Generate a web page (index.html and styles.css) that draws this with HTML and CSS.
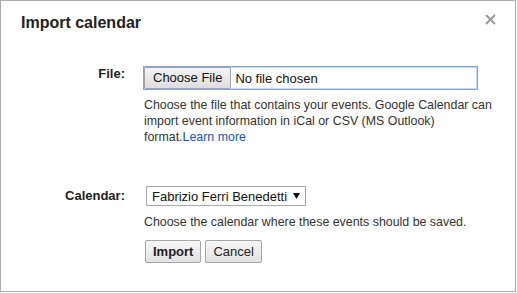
FILE: index.html
```html
<!DOCTYPE html>
<html lang="en">
<head>
    <meta charset="UTF-8">
    <meta name="viewport" content="width=device-width, initial-scale=1.0">
    <title>Import calendar</title>
    <link rel="stylesheet" href="styles.css">
</head>
<body>
    <div class="dialog">
        <h1 class="dialog-title">Import calendar</h1>
        <button class="dialog-close" type="button" aria-label="Close">
            <svg width="11" height="11" viewBox="0 0 11 11">
                <path d="M1 1 L10 10 M10 1 L1 10" stroke="#999" stroke-width="2" fill="none"/>
            </svg>
        </button>

        <form class="import-form" action="#" method="post">
            <div class="row">
                <label class="row-label" for="file">File:</label>
                <div class="row-body">
                    <div class="file-field" id="file">
                        <span class="file-button">Choose File</span>
                        <span class="file-name">No file chosen</span>
                    </div>
                    <p class="help">Choose the file that contains your events. Google Calendar can import event information in iCal or CSV (MS Outlook) format.<a href="#">Learn more</a></p>
                </div>
            </div>

            <div class="row row-calendar">
                <label class="row-label label-calendar" for="calendar">Calendar:</label>
                <div class="row-body">
                    <div class="select" id="calendar">
                        <span>Fabrizio Ferri Benedetti</span>
                        <svg class="select-arrow" width="7" height="6" viewBox="0 0 7 6">
                            <path d="M0 0 L7 0 L3.5 6 Z" fill="#111"/>
                        </svg>
                    </div>
                    <p class="help help-calendar">Choose the calendar where these events should be saved.</p>
                    <div class="actions">
                        <button type="submit" class="btn btn-primary">Import</button>
                        <button type="button" class="btn">Cancel</button>
                    </div>
                </div>
            </div>
        </form>
    </div>
</body>
</html>
```

FILE: styles.css
```css
body {
    margin: 0;
    padding: 0;
    font-family: "Liberation Sans", Arial, sans-serif;
    font-size: 13px;
    color: #222;
    background: #fff;
}

*,
*::before,
*::after {
    box-sizing: border-box;
}

.dialog {
    position: relative;
    width: 516px;
    height: 292px;
    border: 1px solid #acacac;
    padding: 12px 20px;
    background: #fff;
}

.dialog-title {
    margin: 0;
    font-size: 16px;
    line-height: 20px;
    font-weight: bold;
    color: #222;
}

.dialog-close {
    position: absolute;
    top: 13px;
    right: 19px;
    padding: 0;
    border: none;
    background: none;
    width: 11px;
    height: 11px;
    cursor: pointer;
}

.dialog-close svg {
    display: block;
}

.import-form {
    margin-top: 33px;
}

.row {
    display: flex;
}

.row-calendar {
    margin-top: 41px;
}

.row-label {
    flex: none;
    width: 104px;
    margin-right: 18px;
    text-align: right;
    font-weight: bold;
    line-height: 16px;
    color: #222;
}

.label-calendar {
    padding-top: 2px;
}

.row-body {
    flex: 1;
    min-width: 0;
}

.file-field {
    display: flex;
    align-items: center;
    width: 335px;
    height: 24px;
    border: 1px solid #7fa4e4;
    box-shadow: inset 0 0 0 1px #c6d7f5;
    background: #fff;
}

.file-button {
    height: 22px;
    padding: 0 8px;
    line-height: 20px;
    border: 1px solid #a3a3a3;
    border-radius: 2px;
    background: linear-gradient(#f4f4f4, #dedede);
    color: #111;
}

.file-name {
    margin-left: 4px;
    color: #111;
}

.help {
    width: 355px;
    margin: 7px 0 0 1px;
    font-size: 12.4px;
    line-height: 16px;
    color: #333;
}

.help a {
    color: #1155cc;
    text-decoration: none;
}

.help-calendar {
    margin-top: 8px;
}

.select {
    display: inline-flex;
    align-items: center;
    height: 20px;
    margin-left: 3px;
    padding: 0 5px 0 5px;
    border: 1px solid #a9a9a9;
    background: #fff;
    color: #111;
}

.select-arrow {
    margin-left: 6px;
}

.actions {
    display: flex;
    gap: 4px;
    margin: 10px 0 0 2px;
}

.btn {
    height: 23px;
    padding: 0 7px;
    font-family: "Liberation Sans", Arial, sans-serif;
    font-size: 13px;
    color: #222;
    border: 1px solid #a6a6a6;
    border-radius: 2px;
    background: linear-gradient(#f7f7f7, #e2e2e2);
    cursor: pointer;
}

.btn-primary {
    font-weight: bold;
}
```
